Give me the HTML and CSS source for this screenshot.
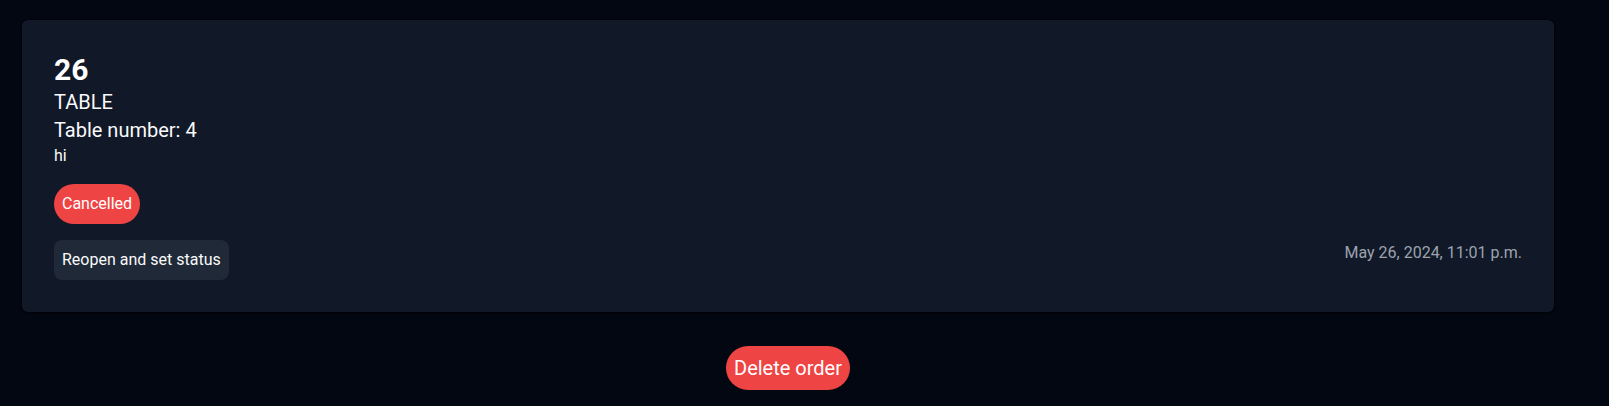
FILE: index.html
```html
<!DOCTYPE html>
<html lang="en">
<head>
<meta charset="utf-8">
<title>Order 26</title>
<link rel="stylesheet" href="styles.css">
</head>
<body>
<main class="page">
  <section class="card">
    <h1 class="order-id">26</h1>
    <div class="order-type">TABLE</div>
    <div class="order-table">Table number: 4</div>
    <div class="order-note">hi</div>
    <span class="badge">Cancelled</span>
    <div class="card-footer">
      <button class="btn-secondary" type="button">Reopen and set status</button>
      <span class="date">May 26, 2024, 11:01 p.m.</span>
    </div>
  </section>
  <div class="actions">
    <button class="btn-danger" type="button">Delete order</button>
  </div>
</main>
</body>
</html>
```
FILE: styles.css
```css
* { box-sizing: border-box; }
html, body { margin: 0; padding: 0; }
body {
  background: #030712;
  color: #f9fafb;
  font-family: Roboto, "Liberation Sans", Arial, sans-serif;
  height: 406px;
  overflow: hidden;
}
.page {
  width: 1532px;
  margin-left: 22px;
  padding-top: 20px;
}
.card {
  background: #111827;
  border-radius: 6px;
  padding: 32px;
  display: flex;
  flex-direction: column;
  align-items: flex-start;
  box-shadow: 0 0 0 1px rgba(0,0,0,0.35), 0 1px 3px rgba(0,0,0,0.6);
}
.order-id {
  margin: 0;
  font-size: 30px;
  line-height: 36px;
  font-weight: 700;
  color: #ffffff;
}
.order-type, .order-table {
  font-size: 20px;
  line-height: 28px;
}
.order-note {
  font-size: 16px;
  line-height: 24px;
}
.badge {
  margin-top: 16px;
  background: #ef4444;
  color: #fff;
  font-size: 16px;
  line-height: 24px;
  padding: 8px 8px;
  border-radius: 9999px;
}
.card-footer {
  margin-top: 16px;
  align-self: stretch;
  display: flex;
  justify-content: space-between;
  align-items: flex-start;
}
.btn-secondary {
  background: #1f2937;
  color: #f9fafb;
  border: 0;
  font-family: inherit;
  font-size: 16px;
  line-height: 24px;
  padding: 8px 8px;
  border-radius: 8px;
}
.date {
  color: #9ca3af;
  font-size: 16px;
  line-height: 24px;
  margin-top: 1px;
}
.actions {
  display: flex;
  justify-content: center;
  padding-top: 34px;
}
.btn-danger {
  background: #ef4444;
  color: #fff;
  border: 0;
  font-family: inherit;
  font-size: 20px;
  line-height: 28px;
  padding: 8px 8px;
  border-radius: 9999px;
}
```
